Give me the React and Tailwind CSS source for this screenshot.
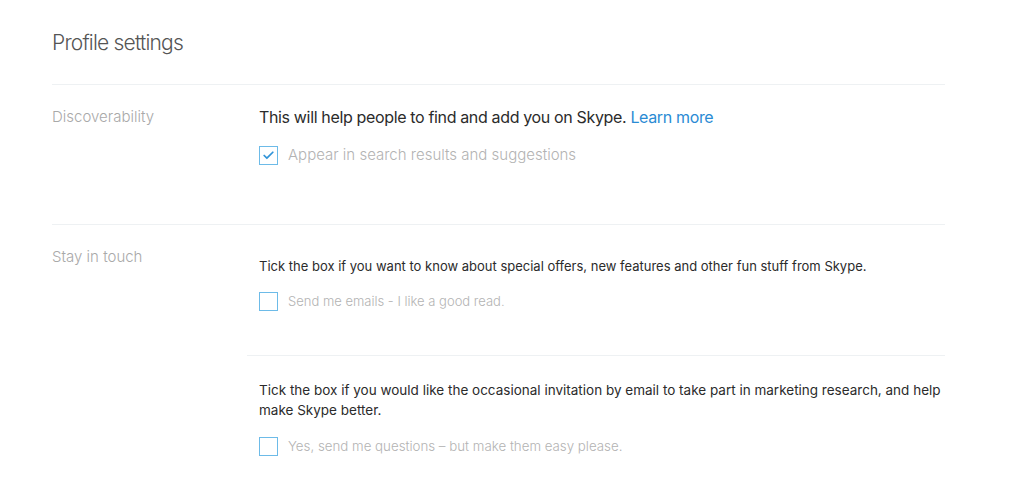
import { Check } from 'lucide-react'

const font = { fontFamily: 'Inter, "Noto Sans", sans-serif' }

function Box({ checked = false }) {
  return (
    <span className="flex h-[19px] w-[19px] shrink-0 items-center justify-center border-[1.5px] border-[#6dbbe8] bg-white">
      {checked ? <Check size={13} strokeWidth={3.2} className="text-[#3194d8]" /> : null}
    </span>
  )
}

function Option({ checked, label, className = '' }) {
  return (
    <label className={`flex items-center gap-[10px] ${className}`}>
      <Box checked={checked} />
      <span className="font-light text-[#b3b3b3]">{label}</span>
    </label>
  )
}

export default function App() {
  return (
    <div className="min-h-[504px] bg-white text-[#333]" style={font}>
      <div className="ml-[52px] w-[893px]">
        <h1 className="pt-[29px] pb-[27px] text-[21px] font-light leading-[28px] tracking-[-0.8px] text-[#555]">
          Profile settings
        </h1>

        <section className="flex border-t border-[#eef1f3] pb-[59px]">
          <h2 className="w-[195px] shrink-0 pt-[22px] text-[15px] font-light leading-[20px] text-[#a9a9a9]">
            Discoverability
          </h2>
          <div className="flex-1 pl-[12px] pt-[22px]">
            <p className="text-[16px] leading-[20px] tracking-[-0.35px] text-[#2b2b2b]">
              This will help people to find and add you on Skype.{' '}
              <a href="#" className="text-[#2a8bd4]">Learn more</a>
            </p>
            <Option checked label="Appear in search results and suggestions" className="mt-[18px] text-[15px] leading-[20px]" />
          </div>
        </section>

        <section className="flex border-t border-[#eef1f3]">
          <h2 className="w-[195px] shrink-0 pt-[22px] text-[15px] font-light leading-[20px] text-[#a9a9a9]">
            Stay in touch
          </h2>
          <div className="flex-1">
            <div className="pl-[12px] pt-[31px] pb-[44px]">
              <p className="text-[13px] leading-[20px] text-[#2b2b2b]">
                Tick the box if you want to know about special offers, new features and other fun stuff from Skype.
              </p>
              <Option label="Send me emails - I like a good read." className="mt-[15px] text-[13px] leading-[20px]" />
            </div>
            <div className="border-t border-[#eef1f3] pl-[12px] pt-[24px] pb-[40px]">
              <p className="text-[13.5px] leading-[20px] text-[#2b2b2b]">
                Tick the box if you would like the occasional invitation by email to take part in marketing research, and help make Skype better.
              </p>
              <Option label="Yes, send me questions – but make them easy please." className="mt-[16px] text-[13.3px] leading-[20px]" />
            </div>
          </div>
        </section>
      </div>
    </div>
  )
}
